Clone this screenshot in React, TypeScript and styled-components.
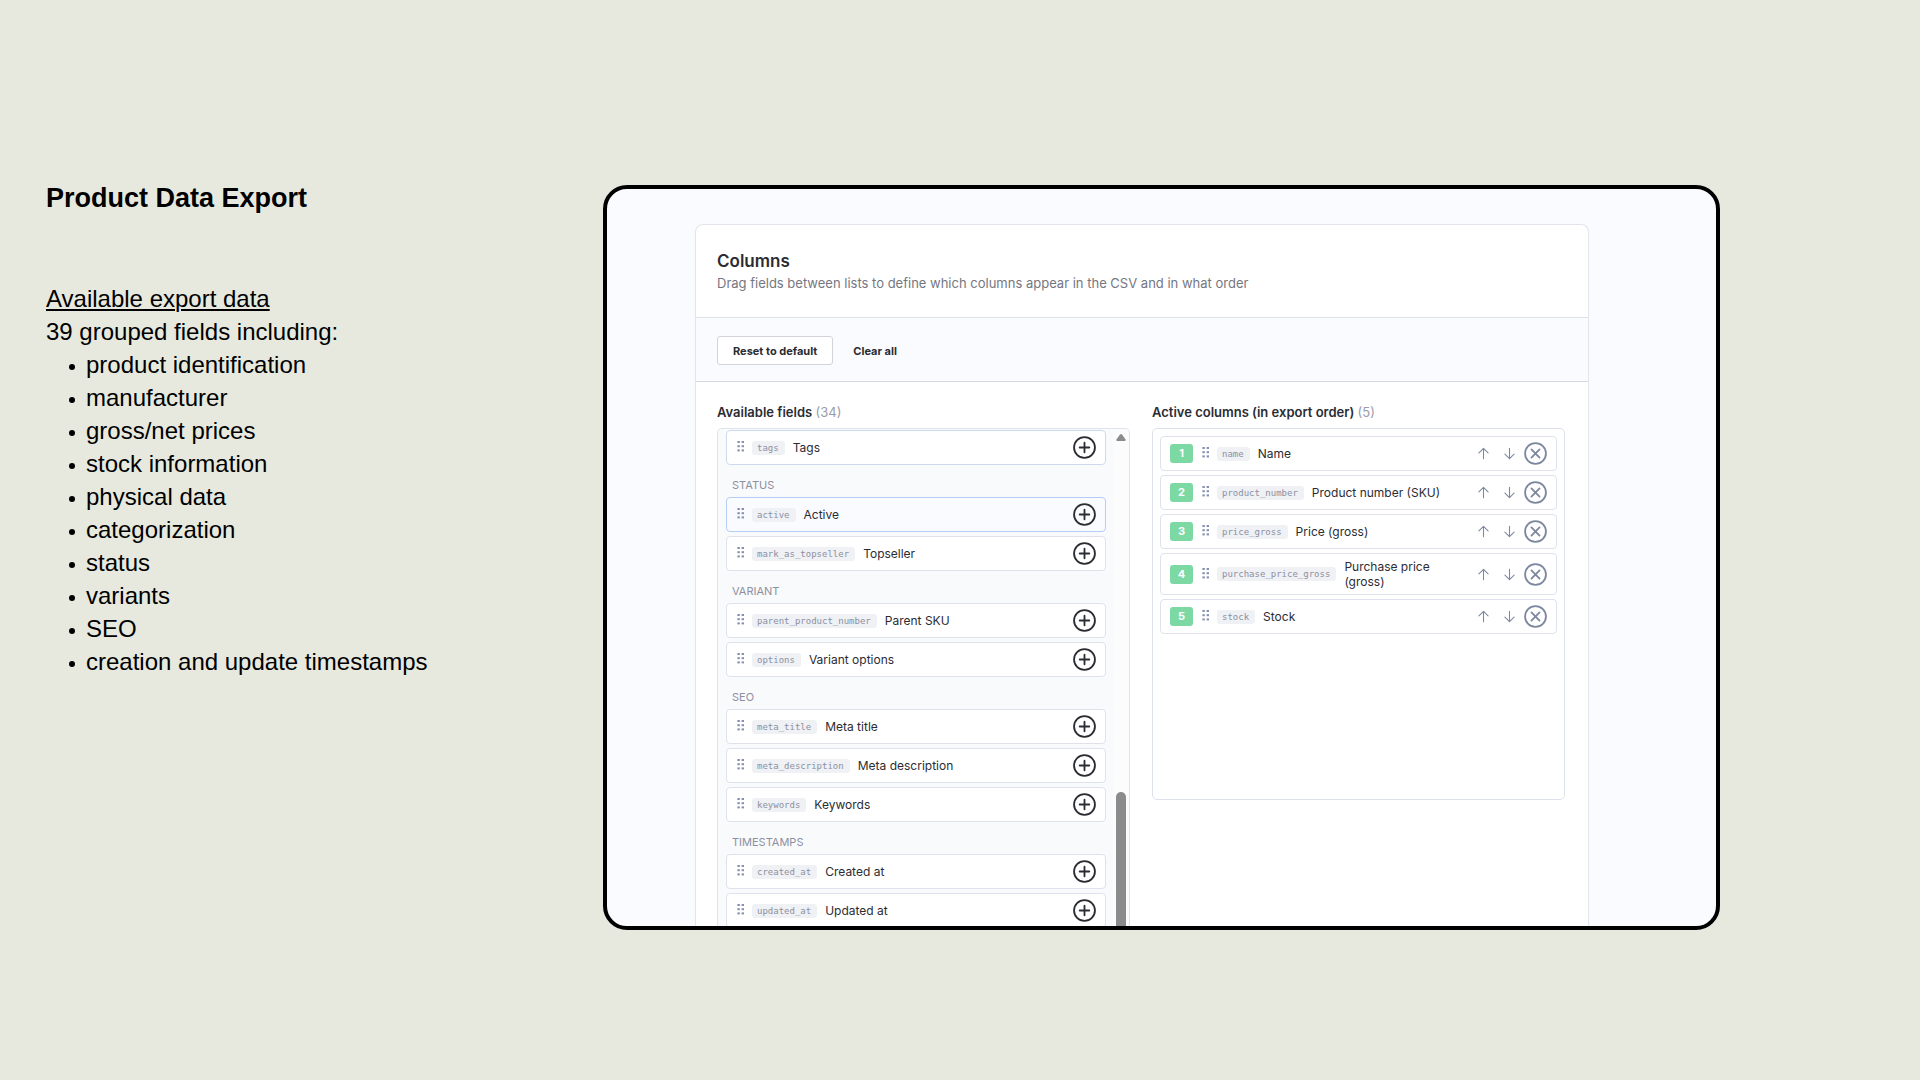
import React from "react";
import styled, { createGlobalStyle } from "styled-components";

const ui = `Inter, "Liberation Sans", sans-serif`;

const GlobalStyle = createGlobalStyle`
  *, *::before, *::after { box-sizing: border-box; }
  body { margin: 0; background: #e7e9df; }
`;

const Page = styled.main`
  display: flex;
  height: 100vh;
  padding: 185px 200px 150px 46px;
  font-family: "Liberation Sans", Arial, sans-serif;
  color: #000;
`;

const Intro = styled.section`
  flex: 0 0 557px;
  font-size: 24px;
  line-height: 33px;
`;

const IntroTitle = styled.h1`
  margin: -3px 0 67px;
  font-size: 27px;
  line-height: 33px;
  font-weight: 700;
`;

const IntroHeading = styled.h2`
  margin: 0;
  font-size: 24px;
  font-weight: 400;
  line-height: 33px;
  text-decoration: underline;
  text-decoration-thickness: 2px;
  text-underline-offset: 2px;
`;

const IntroText = styled.p`
  margin: 0;
`;

const IntroList = styled.ul`
  margin: 0;
  padding: 0 0 0 23px;
  list-style: none;
`;

const IntroItem = styled.li`
  display: flex;
  align-items: center;
  gap: 11px;

  &::before {
    content: "";
    width: 6px;
    height: 6px;
    margin-top: 4px;
    border-radius: 50%;
    background: #000;
  }
`;

const Frame = styled.section`
  flex: 1;
  min-width: 0;
  display: flex;
  padding: 35px 127px 0 88px;
  overflow: hidden;
  border: 4px solid #000;
  border-radius: 24px;
  background: #fafbff;
  font-family: ${ui};
  color: #2b2c33;
`;

const Card = styled.div`
  flex: 1;
  min-width: 0;
  display: flex;
  flex-direction: column;
  border: 1px solid #e3e4ec;
  border-bottom: 0;
  border-radius: 8px 8px 0 0;
  background: #fff;
`;

const CardHeader = styled.header`
  padding: 25px 21px 23px;
  border-bottom: 1px solid #e0e2ea;
`;

const CardTitle = styled.h2`
  margin: 0;
  font-size: 17px;
  font-weight: 600;
  line-height: 22px;
`;

const CardSubtitle = styled.p`
  margin: 0;
  font-size: 13px;
  line-height: 22px;
  color: #75777f;
`;

const Toolbar = styled.div`
  display: flex;
  align-items: center;
  gap: 4px;
  padding: 18px 21px 16px;
  border-bottom: 1px solid #d5d9e2;
  background: #fafbff;
`;

const ToolButton = styled.button<{ $outlined?: boolean }>`
  height: 29px;
  padding: 0 15px;
  border: 1px solid ${(p) => (p.$outlined ? "#d3d4da" : "transparent")};
  border-radius: 3px;
  background: ${(p) => (p.$outlined ? "#fff" : "transparent")};
  color: inherit;
  font-family: inherit;
  font-size: 11px;
  font-weight: 700;
  line-height: 16px;
`;

const Columns = styled.div`
  flex: 1;
  min-height: 0;
  display: grid;
  grid-template-columns: 1fr 1fr;
  gap: 22px;
  padding: 20px 23px 0 21px;
`;

const Column = styled.section`
  min-width: 0;
  min-height: 0;
  display: flex;
  flex-direction: column;
`;

const ColumnTitle = styled.h3`
  margin: 0 0 6px;
  font-size: 13px;
  font-weight: 600;
  line-height: 20px;
`;

const Count = styled.span`
  font-weight: 400;
  color: #9a9cab;
`;

const ScrollBox = styled.div`
  flex: 1;
  min-height: 0;
  display: flex;
  overflow: hidden;
  border: 1px solid #dfe3ed;
  border-bottom: 0;
  border-radius: 5px 5px 0 0;
  background: #f9fafc;
`;

const FieldGroups = styled.div`
  flex: 1;
  min-width: 0;
  padding: 1px 7px 0 8px;
`;

const GroupTitle = styled.h4`
  margin: 0;
  padding: 12px 6px 4px;
  font-size: 11px;
  font-weight: 400;
  line-height: 16px;
  color: #8d90a0;
`;

const Rows = styled.ul`
  display: flex;
  flex-direction: column;
  gap: 4px;
  margin: 0;
  padding: 0;
  list-style: none;
`;

type Tone = "plain" | "soft" | "focus";
const toneBorder = { plain: "#dfe2ec", soft: "#cddaee", focus: "#b5cdf6" };

const Row = styled.li<{ $tone?: Tone }>`
  display: flex;
  align-items: center;
  min-height: 35px;
  padding: 5px 9px;
  border: 1px solid ${(p) => toneBorder[p.$tone ?? "plain"]};
  border-radius: 4px;
  background: ${(p) => (p.$tone === "focus" ? "#fafbff" : "#fff")};
`;

const Grip = styled.svg`
  flex: none;
  width: 10px;
  height: 14px;
  margin: 0 6px 3px 0;
  fill: #8490ad;
`;

const Chip = styled.code`
  flex: none;
  padding: 0 6px 0 5px;
  border-radius: 3px;
  background: #f0f1f5;
  color: #8b90a2;
  font-family: "DejaVu Sans Mono", "Liberation Mono", monospace;
  font-size: 9px;
  line-height: 14px;
`;

const Label = styled.span`
  flex: 1;
  min-width: 0;
  margin: 0 8px;
  font-size: 12px;
  line-height: 15px;
`;

const IconButton = styled.button`
  flex: none;
  width: 23px;
  height: 23px;
  padding: 0;
  border: 0;
  background: none;
  color: inherit;

  svg { display: block; width: 100%; height: 100%; fill: none; stroke: currentColor; stroke-linecap: round; stroke-linejoin: round; }
`;

const RowActions = styled.div`
  display: flex;
  align-items: center;
  gap: 3px;
  color: #7d87a0;
`;

const Badge = styled.span`
  flex: none;
  width: 23px;
  margin-right: 8px;
  border-radius: 3px;
  background: #7dd9a4;
  color: #fff;
  font-size: 11px;
  font-weight: 700;
  line-height: 19px;
  text-align: center;
`;

const ScrollTrack = styled.div`
  flex: none;
  display: flex;
  flex-direction: column;
  align-items: center;
  width: 16px;
  padding-top: 5px;
  background: #fcfcfd;

  svg { flex: none; width: 10px; height: 7px; fill: #8b8b8b; }
`;

const ScrollThumb = styled.div`
  flex: 1;
  width: 10px;
  margin-top: 351px;
  border-radius: 5px 5px 0 0;
  background: #8b8b8b;
`;

const ActiveBox = styled.div`
  min-height: 372px;
  padding: 7px;
  border: 1px solid #dce1ec;
  border-radius: 5px;
`;

const GripIcon = () => (
  <Grip viewBox="0 0 10 14" aria-hidden="true">
    {[1.4, 5.6].map((x) => [2, 6.2, 10.4].map((y) => <rect key={`${x}-${y}`} x={x} y={y} width="2.4" height="2" />))}
  </Grip>
);

const PlusIcon = () => (
  <svg viewBox="0 0 24 24" strokeWidth="1.9" aria-hidden="true">
    <circle cx="12" cy="12" r="10.9" />
    <path d="M12 7v10M7 12h10" />
  </svg>
);

const CrossIcon = () => (
  <svg viewBox="0 0 24 24" strokeWidth="1.9" aria-hidden="true">
    <circle cx="12" cy="12" r="10.9" />
    <path d="M7.8 7.8l8.4 8.4M16.2 7.8l-8.4 8.4" />
  </svg>
);

const ArrowIcon = ({ down }: { down?: boolean }) => (
  <svg viewBox="0 0 24 24" strokeWidth="1.1" aria-hidden="true">
    <path d={down ? "M12 6.6v10.8M7.2 12.6l4.8 4.8 4.8-4.8" : "M12 17.4V6.6M7.2 11.4L12 6.6l4.8 4.8"} />
  </svg>
);

type Field = { code: string; label: string; tone?: Tone };

const groups: { title?: string; fields: Field[] }[] = [
  { fields: [{ code: "tags", label: "Tags", tone: "soft" }] },
  {
    title: "STATUS",
    fields: [
      { code: "active", label: "Active", tone: "focus" },
      { code: "mark_as_topseller", label: "Topseller" },
    ],
  },
  {
    title: "VARIANT",
    fields: [
      { code: "parent_product_number", label: "Parent SKU" },
      { code: "options", label: "Variant options" },
    ],
  },
  {
    title: "SEO",
    fields: [
      { code: "meta_title", label: "Meta title" },
      { code: "meta_description", label: "Meta description" },
      { code: "keywords", label: "Keywords" },
    ],
  },
  {
    title: "TIMESTAMPS",
    fields: [
      { code: "created_at", label: "Created at" },
      { code: "updated_at", label: "Updated at" },
    ],
  },
];

const activeColumns: Field[] = [
  { code: "name", label: "Name" },
  { code: "product_number", label: "Product number (SKU)" },
  { code: "price_gross", label: "Price (gross)" },
  { code: "purchase_price_gross", label: "Purchase price (gross)" },
  { code: "stock", label: "Stock" },
];

const exportData = [
  "product identification",
  "manufacturer",
  "gross/net prices",
  "stock information",
  "physical data",
  "categorization",
  "status",
  "variants",
  "SEO",
  "creation and update timestamps",
];

export default function App() {
  return (
    <Page>
      <GlobalStyle />
      <Intro>
        <IntroTitle>Product Data Export</IntroTitle>
        <IntroHeading>Available export data</IntroHeading>
        <IntroText>39 grouped fields including:</IntroText>
        <IntroList>
          {exportData.map((item) => (
            <IntroItem key={item}>{item}</IntroItem>
          ))}
        </IntroList>
      </Intro>
      <Frame>
        <Card>
          <CardHeader>
            <CardTitle>Columns</CardTitle>
            <CardSubtitle>
              Drag fields between lists to define which columns appear in the CSV and in what order
            </CardSubtitle>
          </CardHeader>
          <Toolbar>
            <ToolButton type="button" $outlined>Reset to default</ToolButton>
            <ToolButton type="button">Clear all</ToolButton>
          </Toolbar>
          <Columns>
            <Column>
              <ColumnTitle>
                Available fields <Count>(34)</Count>
              </ColumnTitle>
              <ScrollBox>
                <FieldGroups>
                  {groups.map((group) => (
                    <React.Fragment key={group.title ?? "top"}>
                      {group.title && <GroupTitle>{group.title}</GroupTitle>}
                      <Rows>
                        {group.fields.map((field) => (
                          <Row key={field.code} $tone={field.tone}>
                            <GripIcon />
                            <Chip>{field.code}</Chip>
                            <Label>{field.label}</Label>
                            <IconButton type="button" aria-label={`Add ${field.label}`}>
                              <PlusIcon />
                            </IconButton>
                          </Row>
                        ))}
                      </Rows>
                    </React.Fragment>
                  ))}
                </FieldGroups>
                <ScrollTrack aria-hidden="true">
                  <svg viewBox="0 0 10 7"><path d="M4 .6q1-1 2 0L9.6 5.4Q10 7 8.800 7H1.200Q0 7 .4 5.400z" /></svg>
                  <ScrollThumb />
                </ScrollTrack>
              </ScrollBox>
            </Column>
            <Column>
              <ColumnTitle>
                Active columns (in export order) <Count>(5)</Count>
              </ColumnTitle>
              <ActiveBox>
                <Rows>
                  {activeColumns.map((field, index) => (
                    <Row key={field.code}>
                      <Badge>{index + 1}</Badge>
                      <GripIcon />
                      <Chip>{field.code}</Chip>
                      <Label>{field.label}</Label>
                      <RowActions>
                        <IconButton type="button" aria-label={`Move ${field.label} up`}>
                          <ArrowIcon />
                        </IconButton>
                        <IconButton type="button" aria-label={`Move ${field.label} down`}>
                          <ArrowIcon down />
                        </IconButton>
                        <IconButton type="button" aria-label={`Remove ${field.label}`}>
                          <CrossIcon />
                        </IconButton>
                      </RowActions>
                    </Row>
                  ))}
                </Rows>
              </ActiveBox>
            </Column>
          </Columns>
        </Card>
      </Frame>
    </Page>
  );
}
